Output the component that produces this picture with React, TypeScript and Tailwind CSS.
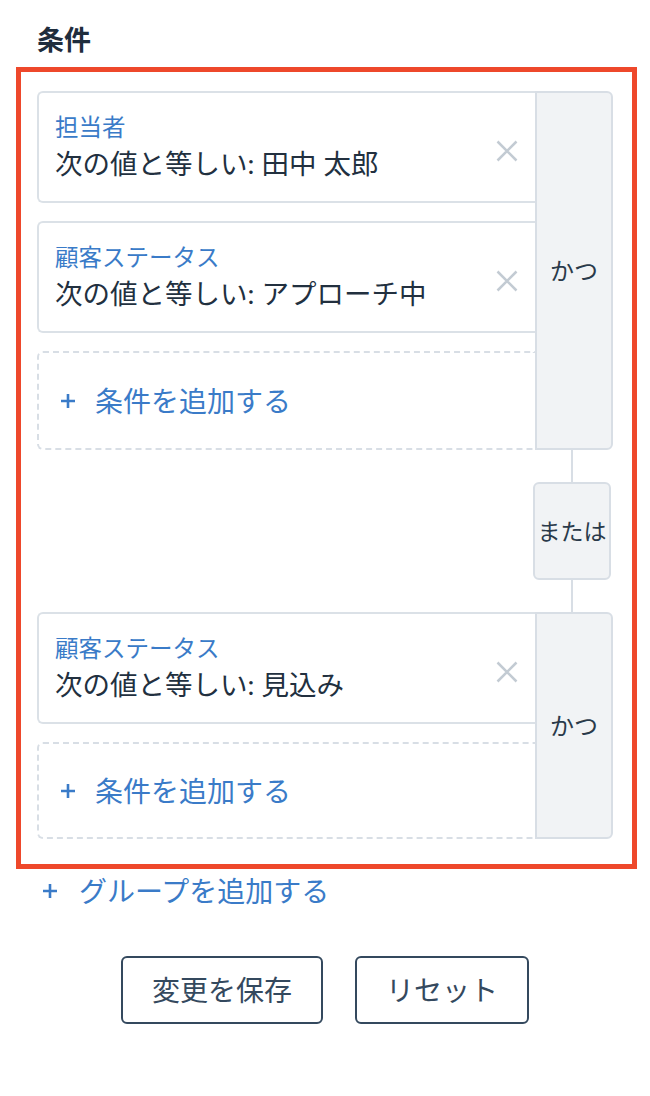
import React from "react"

const FONT = { fontFamily: '"Lato", "Noto Sans CJK JP", sans-serif' }

type Cond = { label: string; value: string }

function PlusIcon() {
  return (
    <svg width="16" height="16" viewBox="0 0 16 16" className="shrink-0">
      <path d="M8 1v14M1 8h14" stroke="#3a7bc8" strokeWidth="2.6" />
    </svg>
  )
}

function XIcon() {
  return (
    <svg width="22" height="22" viewBox="0 0 22 22" className="shrink-0">
      <path d="M1.5 1.5l19 19M20.5 1.5l-19 19" stroke="#c3cbd3" strokeWidth="2.5" />
    </svg>
  )
}

function ConditionCard({ label, value }: Cond) {
  return (
    <div className="flex h-[112px] items-start rounded-l-[6px] border-2 border-r-0 border-[#dbe1e7] bg-white pl-[16px] pr-[17px] pt-[18px]">
      <div className="flex-1">
        <div className="text-[23.5px] leading-[32px] text-[#3a7bc8]">{label}</div>
        <div className="mt-[2px] text-[27.5px] leading-[38px] text-[#22303f]">{value}</div>
      </div>
      <div className="mt-[29px]">
        <XIcon />
      </div>
    </div>
  )
}

function AddCondition({ height }: { height: string }) {
  return (
    <div className={`flex ${height} items-center gap-[19px] rounded-l-[6px] border-2 border-r-0 border-dashed border-[#d8dee5] pl-[21px]`}>
      <PlusIcon />
      <span className="text-[28px] leading-[38px] text-[#3a7bc8]">条件を追加する</span>
    </div>
  )
}

function Group({ conds, addHeight }: { conds: Cond[]; addHeight: string }) {
  return (
    <div className="flex">
      <div className="flex flex-1 flex-col gap-[18px]">
        {conds.map((c, i) => (
          <ConditionCard key={i} {...c} />
        ))}
        <AddCondition height={addHeight} />
      </div>
      <div className="flex w-[78px] items-center justify-center rounded-r-[6px] border-2 border-[#d8dee5] bg-[#f1f3f5] text-[24px] text-[#2a3a4a]">
        かつ
      </div>
    </div>
  )
}

export default function App() {
  return (
    <div className="min-h-[1096px] w-[650px] bg-white" style={FONT}>
      <h2 className="pl-[37px] pt-[22px] text-[27px] font-bold leading-[36px] text-[#1f2d3d]">条件</h2>

      <div className="ml-[16px] mt-[9px] w-[621px] border-[5px] border-[#ee482b] pb-[25px] pl-[16px] pr-[19px] pt-[19px]">
        <Group
          conds={[
            { label: "担当者", value: "次の値と等しい: 田中 太郎" },
            { label: "顧客ステータス", value: "次の値と等しい: アプローチ中" },
          ]}
          addHeight="h-[99px]"
        />

        <div className="flex justify-end pr-[2px]">
          <div className="flex w-[78px] flex-col items-center">
            <div className="h-[32px] w-[2px] bg-[#d8dee5]" />
            <div className="flex h-[98px] w-[78px] items-center justify-center rounded-[6px] border-2 border-[#d8dee5] bg-[#f1f3f5] text-[23px] text-[#2a3a4a]">
              または
            </div>
            <div className="h-[32px] w-[2px] bg-[#d8dee5]" />
          </div>
        </div>

        <Group
          conds={[{ label: "顧客ステータス", value: "次の値と等しい: 見込み" }]}
          addHeight="h-[97px]"
        />
      </div>

      <div className="mt-[3px] flex items-center gap-[21px] pl-[42px]">
        <PlusIcon />
        <span className="text-[28px] leading-[38px] text-[#3a7bc8]">グループを追加する</span>
      </div>

      <div className="mt-[46px] flex justify-center gap-[32px]">
        <button className="flex h-[68px] w-[202px] items-center justify-center rounded-[6px] border-2 border-[#34495e] text-[28px] text-[#34495e]">
          変更を保存
        </button>
        <button className="flex h-[68px] w-[174px] items-center justify-center rounded-[6px] border-2 border-[#34495e] text-[28px] text-[#34495e]">
          リセット
        </button>
      </div>
    </div>
  )
}
